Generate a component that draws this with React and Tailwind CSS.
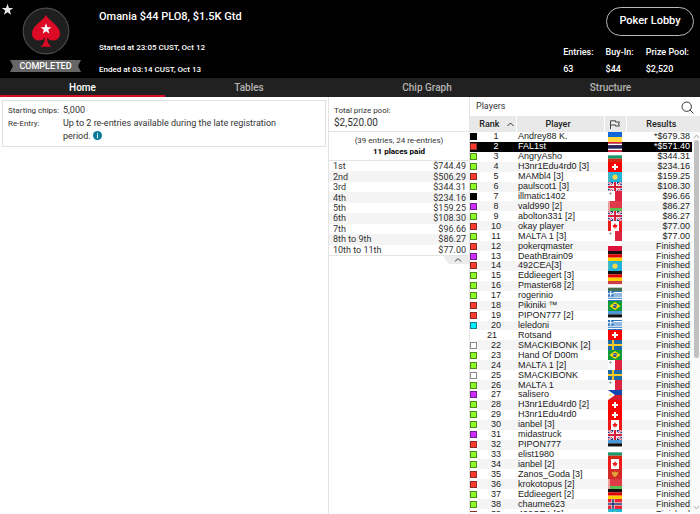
import React from "react";

const SQUARES = {
  k: "bg-black border-black",
  r: "bg-[#ff3b30] border-[#8a2a22]",
  g: "bg-[#8cfa28] border-[#4f8a1c]",
  m: "bg-[#cf2cff] border-[#6f2088]",
  c: "bg-[#00eeff] border-[#16808a]",
  w: "bg-white border-[#8a8a8a]",
};

const PLAYERS = [
  ["k", "Andrey88 K.", "UA", "*$679.38"],
  ["r", "FAL1st", "TH", "*$571.40"],
  ["g", "AngryAsho", "BG", "$344.31"],
  ["g", "H3nr1Edu4rd0 [3]", "CH", "$234.16"],
  ["r", "MAMbl4 [3]", "KZ", "$159.25"],
  ["g", "paulscot1 [3]", "GB", "$108.30"],
  ["k", "illmatic1402", "MT", "$96.66"],
  ["m", "vald990 [2]", "BY", "$86.27"],
  ["g", "abolton331 [2]", "GB", "$86.27"],
  ["r", "okay player", "CA", "$77.00"],
  ["g", "MALTA 1 [3]", "MT", "$77.00"],
  ["r", "pokerqmaster", "PL", "Finished"],
  ["m", "DeathBrain09", "DE", "Finished"],
  ["r", "492CEA[3]", "KZ", "Finished"],
  ["g", "Eddieegert [3]", "DE", "Finished"],
  ["g", "Pmaster68 [2]", "HU", "Finished"],
  ["g", "rogerinio", "GR", "Finished"],
  ["r", "Pikiniki ™", "BR", "Finished"],
  ["r", "PIPON777 [2]", "EE", "Finished"],
  ["c", "leledoni", "GR", "Finished"],
  [null, "Rotsand", "CH", "Finished"],
  ["w", "SMACKIBONK [2]", "SE", "Finished"],
  ["g", "Hand Of D00m", "BR", "Finished"],
  ["g", "MALTA 1 [2]", "MT", "Finished"],
  ["w", "SMACKIBONK", "SE", "Finished"],
  ["g", "MALTA 1", "MT", "Finished"],
  ["m", "salisero", "PH", "Finished"],
  ["g", "H3nr1Edu4rd0 [2]", "CH", "Finished"],
  ["g", "H3nr1Edu4rd0", "CH", "Finished"],
  ["g", "ianbel [3]", "CA", "Finished"],
  ["m", "midastruck", "GB", "Finished"],
  ["r", "PIPON777", "EE", "Finished"],
  ["g", "elist1980", "BG", "Finished"],
  ["g", "ianbel [2]", "CA", "Finished"],
  ["r", "Zanos_Goda [3]", "ME", "Finished"],
  ["r", "krokotopus [2]", "BY", "Finished"],
  ["g", "Eddieegert [2]", "DE", "Finished"],
  ["g", "chaume623", "NO", "Finished"],
  ["r", "492CEA [2]", "KZ", "Finished"],
];

const PAYOUTS = [
  ["1st", "$744.49"],
  ["2nd", "$506.29"],
  ["3rd", "$344.31"],
  ["4th", "$234.16"],
  ["5th", "$159.25"],
  ["6th", "$108.30"],
  ["7th", "$96.66"],
  ["8th to 9th", "$86.27"],
  ["10th to 11th", "$77.00"],
];

const bands = (...colors) =>
  colors.map((c, i) => (
    <rect key={i} y={(10 / colors.length) * i} width="14" height={10 / colors.length} fill={c} />
  ));

const FLAGS = {
  UA: bands("#1268d8", "#ffd83c"),
  TH: bands("#e0203c", "#fff", "#2a2560", "#2a2560", "#fff", "#e0203c"),
  BG: bands("#fff", "#1a9a6c", "#d62612"),
  PL: bands("#fff", "#dc143c"),
  DE: bands("#111", "#e00000", "#ffce00"),
  HU: bands("#ce3a48", "#fff", "#477050"),
  EE: bands("#4a98d8", "#111", "#fff"),
  CH: (
    <>
      <rect width="14" height="10" fill="#f00" />
      <path d="M4 5H10M7 2V8" stroke="#fff" strokeWidth="2" />
    </>
  ),
  KZ: (
    <>
      <rect width="14" height="10" fill="#22b4d6" />
      <circle cx="7" cy="5" r="2.6" fill="#f8d648" />
      <path d="M1 1V9" stroke="#8fcf9a" strokeWidth=".6" />
    </>
  ),
  GB: (
    <>
      <rect width="14" height="10" fill="#24357f" />
      <path d="M0 0L14 10M14 0L0 10" stroke="#fff" strokeWidth="2.2" />
      <path d="M0 0L14 10M14 0L0 10" stroke="#d8203a" strokeWidth=".8" />
      <path d="M7 0V10M0 5H14" stroke="#fff" strokeWidth="3.6" />
      <path d="M7 0V10M0 5H14" stroke="#d8203a" strokeWidth="2" />
    </>
  ),
  MT: (
    <>
      <rect width="14" height="10" fill="#fff" />
      <rect x="7" width="7" height="10" fill="#dc2340" />
      <path d="M1 2.5H4M2.500 1V4" stroke="#aaa" strokeWidth="1" />
    </>
  ),
  BY: (
    <>
      <rect width="14" height="7" fill="#e03a48" />
      <rect y="7" width="14" height="3" fill="#58c050" />
      <rect width="2" height="10" fill="#eda0a0" />
    </>
  ),
  CA: (
    <>
      <rect width="14" height="10" fill="#fff" />
      <rect width="3" height="10" fill="#f01818" />
      <rect x="11" width="3" height="10" fill="#f01818" />
      <path d="M7 2L8 4L9.500 4L8.700 6.500H7.300V8H6.700V6.500H5.300L4.500 4H6Z" fill="#f01818" />
    </>
  ),
  GR: (
    <>
      <rect width="14" height="10" fill="#fff" />
      <path d="M0 .5H14M0 3H14M0 5H14M0 7.200H14M0 9.500H14" stroke="#2a74c4" strokeWidth="1.100" />
      <rect width="5.500" height="5.600" fill="#2a74c4" />
      <path d="M2.700 0V5.600M0 2.800H5.500" stroke="#fff" strokeWidth="1.100" />
    </>
  ),
  BR: (
    <>
      <rect width="14" height="10" fill="#109a3c" />
      <path d="M1.500 5L7 1L12.500 5L7 9Z" fill="#fedf00" />
      <circle cx="7" cy="5" r="2.100" fill="#173a86" />
      <path d="M5 4.500Q7 4.200 9 5.800" stroke="#fff" strokeWidth=".6" fill="none" />
    </>
  ),
  SE: (
    <>
      <rect width="14" height="10" fill="#1c6ba8" />
      <path d="M5 0V10M0 5H14" stroke="#fecc22" strokeWidth="1.800" />
    </>
  ),
  PH: (
    <>
      <rect width="14" height="5" fill="#1446b0" />
      <rect y="5" width="14" height="5" fill="#d8182c" />
      <path d="M0 0L7 5L0 10Z" fill="#fff" />
      <circle cx="2.400" cy="5" r="1.100" fill="#fcd116" />
    </>
  ),
  ME: (
    <>
      <rect width="14" height="10" fill="#d22a26" />
      <path d="M3.500 2.500L6 3.500L7 2L8 3.500L10.500 2.500L9.500 6L7 8.200L4.500 6Z" fill="#e0a63c" />
    </>
  ),
  NO: (
    <>
      <rect width="14" height="10" fill="#ec2434" />
      <path d="M5 0V10M0 5H14" stroke="#fff" strokeWidth="3" />
      <path d="M5 0V10M0 5H14" stroke="#1c3470" strokeWidth="1.500" />
    </>
  ),
};

const STAR = "M12 1.500L14.700 9H22.500L16.300 13.800L18.600 21.500L12 17L5.400 21.500L7.700 13.800L1.500 9H9.300Z";

function Flag({ code }) {
  return (
    <svg viewBox="0 0 14 10" preserveAspectRatio="none" className="-my-px block h-[10px] w-[14px]" role="img" aria-label={code}>
      {FLAGS[code]}
    </svg>
  );
}

function Stat({ label, value }) {
  return (
    <div>
      <dt>{label}</dt>
      <dd className="mt-1">{value}</dd>
    </div>
  );
}

function Header() {
  return (
    <header className="flex h-[78px] shrink-0 bg-black font-medium text-white">
      <button aria-label="Favourite" className="mt-[3px] ml-px h-[13px] w-[13px] shrink-0">
        <svg viewBox="0 0 24 24" className="h-[13px] w-[13px]">
          <path d={STAR} fill="#e8e8e8" />
        </svg>
      </button>
      <div className="-ml-1 flex w-[71px] shrink-0 flex-col items-center">
        <svg viewBox="0 0 48 48" className="mt-[7px] h-[48px] w-[48px]">
          <circle cx="24" cy="24" r="22.800" fill="#1f1f1f" stroke="#4a4a4a" strokeWidth="1.200" />
          <path
            d="M24 8C25.500 12.500 38 18.500 38 26.500C38 31 34.500 33.500 31.200 33.500C28.500 33.500 26 32.400 25 30.800C25.300 35 26.500 37.500 29.500 39.800H18.500C21.500 37.500 22.700 35 23 30.800C22 32.400 19.500 33.500 16.800 33.500C13.500 33.500 10 31 10 26.500C10 18.500 22.500 12.500 24 8Z"
            fill="#dc0a24"
          />
          <path d={STAR} fill="#fff" transform="translate(17.800 15.500) scale(.52)" />
        </svg>
        <div className="mt-[5px] grid w-[71px]">
          <svg viewBox="0 0 71 12" className="col-start-1 row-start-1 h-[12px] w-[71px]">
            <path d="M0 0H71L68 6L71 12H0L3 6Z" fill="#666" />
          </svg>
          <span className="col-start-1 row-start-1 text-center text-[9px] leading-[13px]">COMPLETED</span>
        </div>
      </div>
      <div className="ml-[18px] flex flex-col">
        <h1 className="mt-[9px] text-[11px] leading-[15px]">Omania $44 PLO8, $1.5K Gtd</h1>
        <p className="mt-[18px] text-[8px] leading-[12px]">Started at 23:05 CUST, Oct 12</p>
        <p className="mt-[10px] text-[8px] leading-[12px]">Ended at 03:14 CUST, Oct 13</p>
      </div>
      <div className="mr-[6px] ml-auto flex flex-col items-end">
        <button className="mt-[7px] h-[29px] w-[88px] rounded-full border border-[#b8b8b8] text-[11px]">Poker Lobby</button>
        <dl className="mt-[10px] mr-[5px] flex gap-3 text-[9px] leading-[13px]">
          <Stat label="Entries:" value="63" />
          <Stat label="Buy-In:" value="$44" />
          <Stat label="Prize Pool:" value="$2,520" />
        </dl>
      </div>
    </header>
  );
}

function Tabs() {
  return (
    <nav className="grid h-[19px] shrink-0 grid-cols-[165fr_168fr_188fr_179fr] bg-[#212121] text-[10px] font-medium text-[#b4b4b4]">
      <button className="border-b-2 border-[#dc0a24] pt-px text-white">Home</button>
      <button className="border-b-2 border-transparent pt-px">Tables</button>
      <button className="border-b-2 border-transparent pt-px">Chip Graph</button>
      <button className="border-b-2 border-transparent pt-px">Structure</button>
    </nav>
  );
}

function Info() {
  return (
    <section className="min-w-0 flex-1 border-r border-[#e4e4e4] p-[2px]">
      <dl className="mt-px grid grid-cols-[55px_1fr] border border-[#e0e0e0] px-[5px] py-[3px] text-[9px] leading-[13px]">
        <dt className="text-[8px] whitespace-nowrap">Starting chips:</dt>
        <dd>5,000</dd>
        <dt className="text-[8px]">Re-Entry:</dt>
        <dd>
          <span className="block max-w-[228px]">
            Up to 2 re-entries available during the late registration period.{" "}
            <svg viewBox="0 0 10 10" className="inline h-[9px] w-[9px] align-[-1px]" aria-label="More information">
              <circle cx="5" cy="5" r="5" fill="#067a98" />
              <path d="M5 2V3M5 4V8" stroke="#fff" strokeWidth="1.200" />
            </svg>
          </span>
        </dd>
      </dl>
    </section>
  );
}

function Prizes() {
  return (
    <section className="w-[141px] shrink-0 border-r border-[#e4e4e4]">
      <div className="border-b border-[#e4e4e4] px-[5px] pt-[8px] pb-[2px] leading-[12px]">
        <h2 className="text-[8px]">Total prize pool:</h2>
        <p className="text-[10px]">$2,520.00</p>
      </div>
      <div className="border-b border-[#e4e4e4] pt-[3px] pb-[3px] text-center text-[8px] leading-[11px]">
        <p>(39 entries, 24 re-entries)</p>
        <p className="font-bold text-black">11 places paid</p>
      </div>
      <table className="h-[95px] w-full border-b border-[#e4e4e4] text-[9px] leading-[10px]">
        <tbody>
          {PAYOUTS.map(([place, prize]) => (
            <tr key={place} className="even:bg-[#f4f4f4]">
              <td className="p-0 pl-1">{place}</td>
              <td className="p-0 pr-[3px] text-right">{prize}</td>
            </tr>
          ))}
        </tbody>
      </table>
      <button aria-label="Collapse payouts" className="ml-auto block h-[8px] w-[26px]">
        <svg viewBox="0 0 26 8" className="h-[8px] w-[26px]">
          <path d="M0 0H26V8H6Z" fill="#ececec" />
          <path d="M12 5.500L15 2.500L18 5.500" fill="none" stroke="#333" />
        </svg>
      </button>
    </section>
  );
}

function Players() {
  return (
    <section className="flex min-h-0 w-[230px] shrink-0 flex-col">
      <div className="flex h-[19px] shrink-0 items-center justify-between pt-px pr-[6px] pl-[6px] text-[9px]">
        <h2>Players</h2>
        <button aria-label="Search players" className="h-[13px] w-[13px]">
          <svg viewBox="0 0 13 13" className="h-[13px] w-[13px]" fill="none" stroke="#333">
            <circle cx="5.700" cy="5.700" r="4.700" />
            <path d="M9 9L12.500 12.500" />
          </svg>
        </button>
      </div>
      <div className="flex min-h-0 flex-1 bg-[linear-gradient(#e9e9e9_16px,#fff_16px)]">
        <div className="mb-[2px] min-w-0 flex-1 overflow-hidden">
          <table className="h-[403px] w-full table-fixed font-['Liberation_Sans',Arial,sans-serif] text-[9px] leading-[9px] text-[#222]">
            <colgroup>
              <col className="w-[8px]" />
              <col className="w-[38px]" />
              <col className="w-[88px]" />
              <col className="w-[22px]" />
              <col />
            </colgroup>
            <thead className="font-['Roboto',sans-serif]">
              <tr className="h-[16px] bg-[#e9e9e9]">
                <th colSpan={2} className="border-r border-white p-0 font-medium">
                  <span className="flex items-center justify-end gap-[7px] pr-[2px]">
                    Rank
                    <svg viewBox="0 0 7 5" className="h-[5px] w-[7px]" fill="none" stroke="#333">
                      <path d="M.5 4L3.500 1L6.500 4" />
                    </svg>
                  </span>
                </th>
                <th className="border-r border-white p-0 pr-1 font-medium">Player</th>
                <th className="border-r border-white p-0" aria-label="Country">
                  <svg viewBox="0 0 10 9" className="mx-auto h-[9px] w-[10px]" fill="none" stroke="#444">
                    <path d="M.5 9V.8H5.500V2H9.500L8.500 4L9.500 6H5.500V5H.5" />
                  </svg>
                </th>
                <th className="p-0 pl-1 font-medium">Results</th>
              </tr>
            </thead>
            <tbody>
              {PLAYERS.map(([square, name, flag, result], i) => {
                const cell = i === 1 ? "bg-black text-white p-0" : i % 2 ? "bg-[#f5f5f5] p-0" : "bg-white p-0";
                return (
                  <tr key={i}>
                    <td className={i === 1 ? "bg-black p-0" : "bg-white p-0"}>
                      {square && <span className={`block h-[7px] w-[7px] border ${SQUARES[square]}`} />}
                    </td>
                    <td className={`${cell} text-center`}>
                      <span className={square ? "pr-[2px]" : "pr-[10px]"}>{i + 1}</span>
                    </td>
                    <td className={`${cell} whitespace-nowrap`}>
                      <span className="pl-[2px]">{name}</span>
                    </td>
                    <td className={cell}>
                      <span className="flex justify-center">
                        <Flag code={flag} />
                      </span>
                    </td>
                    <td className={`${cell} text-right`}>
                      <span className="pr-[2px]">{result}</span>
                    </td>
                  </tr>
                );
              })}
            </tbody>
          </table>
        </div>
        <div className="mt-[16px] flex w-[8px] shrink-0 flex-col items-center bg-[#fafafa]" aria-hidden="true">
          <svg viewBox="0 0 7 8" className="h-[8px] w-[7px] shrink-0" fill="none" stroke="#aaa">
            <path d="M1 6L3.500 3L6 6" />
          </svg>
          <span className="h-[57%] w-[5px] rounded-full bg-[#c1c1c1]" />
          <svg viewBox="0 0 7 8" className="mt-auto mb-[2px] h-[8px] w-[7px] shrink-0" fill="none" stroke="#aaa">
            <path d="M1 2L3.500 5L6 2" />
          </svg>
        </div>
      </div>
    </section>
  );
}

export default function App() {
  return (
    <div className="flex h-screen flex-col overflow-hidden bg-white font-['Roboto',sans-serif] text-[#333]">
      <Header />
      <Tabs />
      <main className="flex min-h-0 flex-1">
        <Info />
        <Prizes />
        <Players />
      </main>
    </div>
  );
}
